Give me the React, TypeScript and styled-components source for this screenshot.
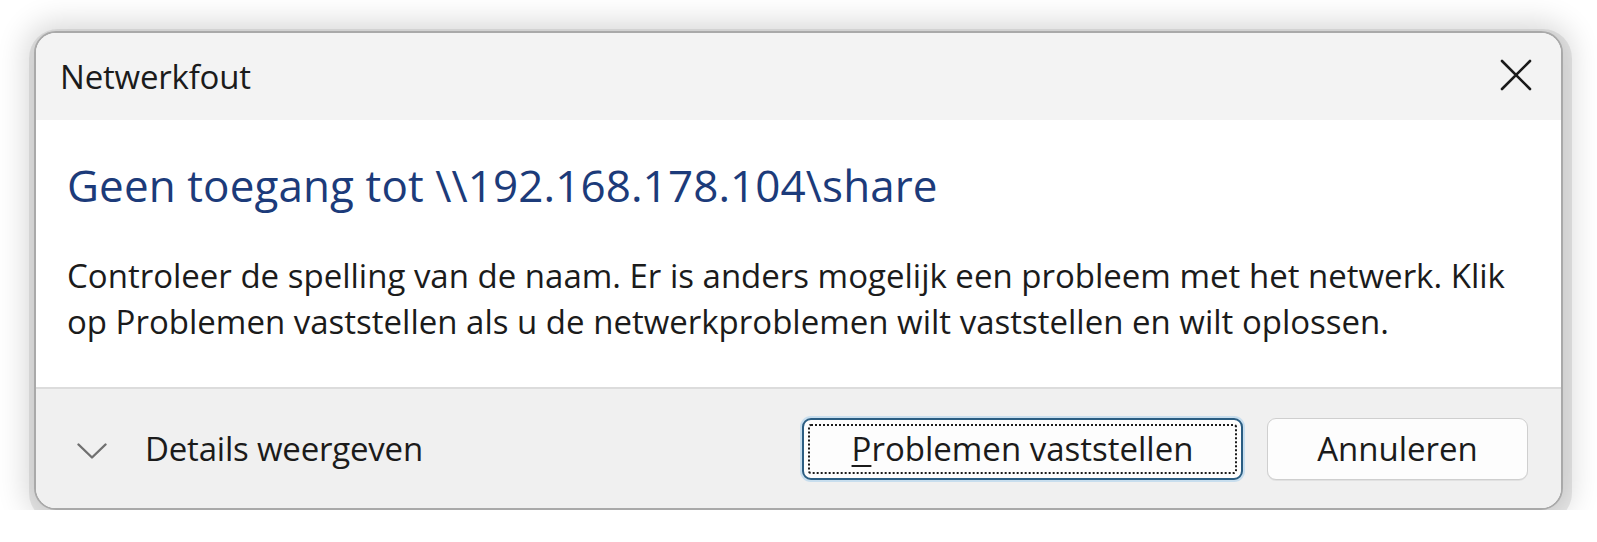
import React from "react";
import styled, { createGlobalStyle } from "styled-components";

const GlobalStyle = createGlobalStyle`
  html, body {
    margin: 0;
    padding: 0;
    background: #ffffff;
  }
  body {
    font-family: "Open Sans", "Noto Sans", "Liberation Sans", sans-serif;
    color: #1b1b1b;
  }
`;

const Page = styled.div`
  padding: 31px 0 0 34px;
`;

const Dialog = styled.div`
  box-sizing: border-box;
  width: 1529px;
  height: 479px;
  border: 2px solid #a9a9a9;
  border-radius: 22px;
  overflow: hidden;
  display: flex;
  flex-direction: column;
  background: #ffffff;
  box-shadow: 2px 5px 0 7px rgba(0, 0, 0, 0.08), 0 0 30px 8px rgba(0, 0, 0, 0.16);
`;

const TitleBar = styled.div`
  height: 87px;
  flex: none;
  display: flex;
  align-items: center;
  justify-content: space-between;
  padding: 0 28px 0 24px;
  background: #f3f3f3;
`;

const Title = styled.span`
  font-size: 33px;
  letter-spacing: -0.2px;
  color: #1b1b1b;
`;

const CloseButton = styled.button`
  width: 34px;
  height: 34px;
  margin-top: -3px;
  padding: 0;
  border: none;
  background: transparent;
  display: flex;
  align-items: center;
  justify-content: center;
`;

const Content = styled.div`
  flex: 1;
  padding: 37px 0 0 31px;
  background: #ffffff;
`;

const Heading = styled.div`
  font-size: 44px;
  line-height: 56px;
  color: #1c3b7a;
  white-space: nowrap;
  letter-spacing: 0.1px;
`;

const Body = styled.p`
  margin: 40px 0 0;
  font-size: 33px;
  line-height: 46px;
  color: #1b1b1b;
  white-space: nowrap;
`;

const Footer = styled.div`
  height: 119px;
  flex: none;
  border-top: 2px solid #dcdcdc;
  background: #f0f0f0;
  display: flex;
  align-items: center;
  padding: 0 33px 0 41px;
`;

const DetailsToggle = styled.div`
  display: flex;
  align-items: center;
  gap: 38px;
  font-size: 33px;
  letter-spacing: -0.2px;
  color: #1b1b1b;

  svg {
    margin-top: 4px;
  }
`;

const Actions = styled.div`
  margin-left: auto;
  display: flex;
  gap: 24px;
`;

const Button = styled.button<{ $primary?: boolean; $width: number }>`
  position: relative;
  box-sizing: border-box;
  width: ${(p) => p.$width}px;
  height: 62px;
  border-radius: 9px;
  background: #fdfdfd;
  border: ${(p) => (p.$primary ? "2px solid #2b5d82" : "1.5px solid #cfcfcf")};
  box-shadow: ${(p) =>
    p.$primary ? "0 0 0 2px rgba(150, 200, 235, 0.45)" : "0 1px 0 rgba(0,0,0,0.06)"};
  font-family: "Open Sans", "Noto Sans", sans-serif;
  font-size: 33px;
  color: #1b1b1b;
  padding: 0;
  display: flex;
  align-items: center;
  justify-content: center;

  ${(p) =>
    p.$primary &&
    `
    &::after {
      content: "";
      position: absolute;
      inset: 4px;
      border: 2px dotted #1b1b1b;
      border-radius: 3px;
    }
  `}
`;

const AccessKey = styled.span`
  text-decoration: underline;
  text-decoration-thickness: 2px;
  text-underline-offset: 4px;
`;

export default function App() {
  return (
    <>
      <GlobalStyle />
      <Page>
        <Dialog>
          <TitleBar>
            <Title>Netwerkfout</Title>
            <CloseButton aria-label="Sluiten">
              <svg width="32" height="32" viewBox="0 0 32 32">
                <path
                  d="M2 2 L30 30 M30 2 L2 30"
                  stroke="#1b1b1b"
                  strokeWidth="2.6"
                  strokeLinecap="round"
                />
              </svg>
            </CloseButton>
          </TitleBar>
          <Content>
            <Heading>Geen toegang tot \\192.168.178.104\share</Heading>
            <Body>
              Controleer de spelling van de naam. Er is anders mogelijk een probleem met het netwerk. Klik
              <br />
              op Problemen vaststellen als u de netwerkproblemen wilt vaststellen en wilt oplossen.
            </Body>
          </Content>
          <Footer>
            <DetailsToggle>
              <svg width="30" height="16" viewBox="0 0 30 16">
                <polyline
                  points="1.5,1.5 15,14.5 28.5,1.5"
                  fill="none"
                  stroke="#707070"
                  strokeWidth="2.4"
                  strokeLinecap="round"
                  strokeLinejoin="round"
                />
              </svg>
              <span>Details weergeven</span>
            </DetailsToggle>
            <Actions>
              <Button $primary $width={441}>
                <span>
                  <AccessKey>P</AccessKey>roblemen vaststellen
                </span>
              </Button>
              <Button $width={261}>Annuleren</Button>
            </Actions>
          </Footer>
        </Dialog>
      </Page>
    </>
  );
}
